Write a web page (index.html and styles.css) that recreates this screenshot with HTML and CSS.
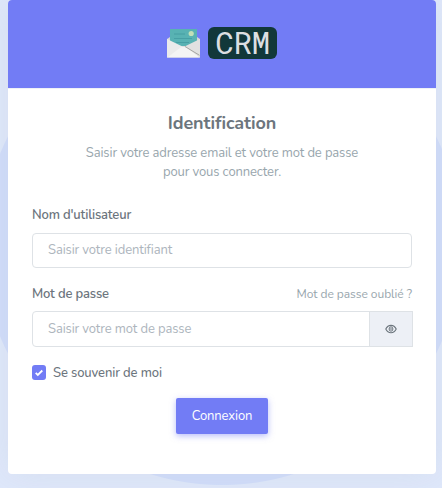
FILE: index.html
```html
<!DOCTYPE html>
<html lang="fr">
<head>
<meta charset="utf-8">
<title>Identification</title>
<link rel="stylesheet" href="styles.css">
</head>
<body>
<main class="card">
  <header class="card-header">
    <svg class="mail" width="33" height="30" viewBox="0 0 33 30" aria-hidden="true">
      <path fill="#d5d5d5" d="M0 11 3 9h27l3 2v18.5H0z"/>
      <path fill="#58b2b3" d="M3 1h27v17H3z"/>
      <circle cx="24.2" cy="5.5" r="2.6" fill="#c2dfb8"/>
      <path stroke="#429b9f" stroke-width=".8" d="M7 6h11M7 10.5h18M9 14.5h13"/>
      <path fill="#ebebeb" d="M0 11 16.5 19 0 29.5z"/>
      <path fill="#e1e1e1" d="M33 11v18L16.5 19z"/>
      <path fill="#f4f4f4" d="M0 29.5 14 19.3q2.5-1.3 5 0L33 29.5z"/>
      <path fill="none" stroke="#8b8b87" stroke-width=".7" d="m18 18.5 14.5 8.8"/>
    </svg>
    <span class="brand">CRM</span>
  </header>
  <form class="card-body">
    <h1 class="title">Identification</h1>
    <p class="intro">Saisir votre adresse email et votre mot de passe<br>pour vous connecter.</p>
    <label class="label label-user" for="user">Nom d'utilisateur</label>
    <input class="input input-user" id="user" type="text" placeholder="Saisir votre identifiant">
    <div class="label-row">
      <label class="label label-password" for="password">Mot de passe</label>
      <a class="forgot">Mot de passe oublié ?</a>
    </div>
    <div class="input-group">
      <input class="input input-password" id="password" type="password" placeholder="Saisir votre mot de passe">
      <span class="addon">
        <svg width="12" height="10" viewBox="0 0 12 10" fill="none" stroke="#6c757d" aria-hidden="true">
          <path stroke-width="1.1" d="M.8 5C3.1.1 8.9.1 11.2 5 8.9 9.9 3.1 9.9.8 5z"/>
          <ellipse cx="6" cy="5" rx="1.9" ry="2.2"/>
          <path d="M6 4v2"/>
        </svg>
      </span>
    </div>
    <label class="remember">
      <span class="check"><svg width="8" height="8" viewBox="0 0 8 8" fill="none" stroke="#fff" stroke-width="1.8" aria-hidden="true"><path d="m.7 3.9 2.1 2.1 4.5-4.5"/></svg></span>
      <span class="remember-text">Se souvenir de moi</span>
    </label>
    <button class="submit" type="button">Connexion</button>
  </form>
</main>
</body>
</html>
```
FILE: styles.css
```css
* { box-sizing: border-box; }
body {
  margin: 0;
  height: 488px;
  overflow: hidden;
  padding: 0 6px 0 8px;
  font: 13px/19px Nunito, Lato, sans-serif;
  letter-spacing: -.12px;
  color: #6c757d;
  background: radial-gradient(circle at 222px 245px, #d1ddfb 239.5px, #dfe8fb 240.5px);
}
.card {
  height: 474px;
  border-radius: 4px;
  overflow: hidden;
  background: #fff;
  box-shadow: 0 0 35px rgba(154, 161, 171, .15);
}
.card-header {
  display: flex;
  align-items: flex-start;
  gap: 8px;
  height: 88px;
  padding: 28px 0 0 159px;
  background: #727cf5;
}
.brand {
  width: 69px;
  height: 32px;
  margin-top: -1px;
  border-radius: 6px;
  background: #12383a;
  color: #dcdfe1;
  text-align: center;
  font: 31px/31px "Roboto Mono", "Liberation Mono", monospace;
  letter-spacing: -.5px;
}
.card-body { padding: 24px 24px 0; border-top: 1px solid #eef2f7; }
.title { margin: 0 0 11px; text-align: center; font-size: 18px; line-height: 20px; font-weight: 700; }
.intro { margin: 0 0 24px; text-align: center; color: #98a6ad; white-space: nowrap; }
.label { display: block; font-weight: 600; letter-spacing: -.18px; }
.label-user { margin-bottom: 8px; }
.input {
  display: block;
  width: 100%;
  height: 35px;
  padding: 0 15px;
  border: 1px solid #dee2e6;
  border-radius: 4px;
  background: #fff;
  font: inherit;
  letter-spacing: -.12px;
  outline: none;
}
.input-user { padding-bottom: 2px; }
.input::placeholder { color: #adb5bd; opacity: 1; }
.label-row { display: flex; justify-content: space-between; margin: 17px 0 7px; }
.forgot { font-size: 12px; letter-spacing: -.05px; color: #98a6ad; }
.input-group { display: flex; width: 381px; }
.input-password { flex: 1; height: 36px; border-radius: 4px 0 0 4px; }
.addon {
  display: flex;
  align-items: center;
  justify-content: center;
  width: 44px;
  height: 36px;
  margin-left: -1px;
  border: 1px solid #dee2e6;
  background: #edf0f6;
}
.remember { display: flex; align-items: center; gap: 7px; margin-top: 16px; }
.remember-text { position: relative; top: 1px; font-weight: 500; }
.check {
  display: flex;
  align-items: center;
  justify-content: center;
  width: 14px;
  height: 15px;
  border-radius: 3px;
  background: #727cf5;
}
.submit {
  display: block;
  width: 92px;
  height: 36px;
  margin: 16px auto 0;
  padding: 0;
  border: 0;
  border-radius: 2px;
  background: #727cf5;
  color: #fff;
  font: inherit;
  letter-spacing: -.12px;
  box-shadow: 0 2px 6px rgba(114, 124, 245, .5);
}
```
